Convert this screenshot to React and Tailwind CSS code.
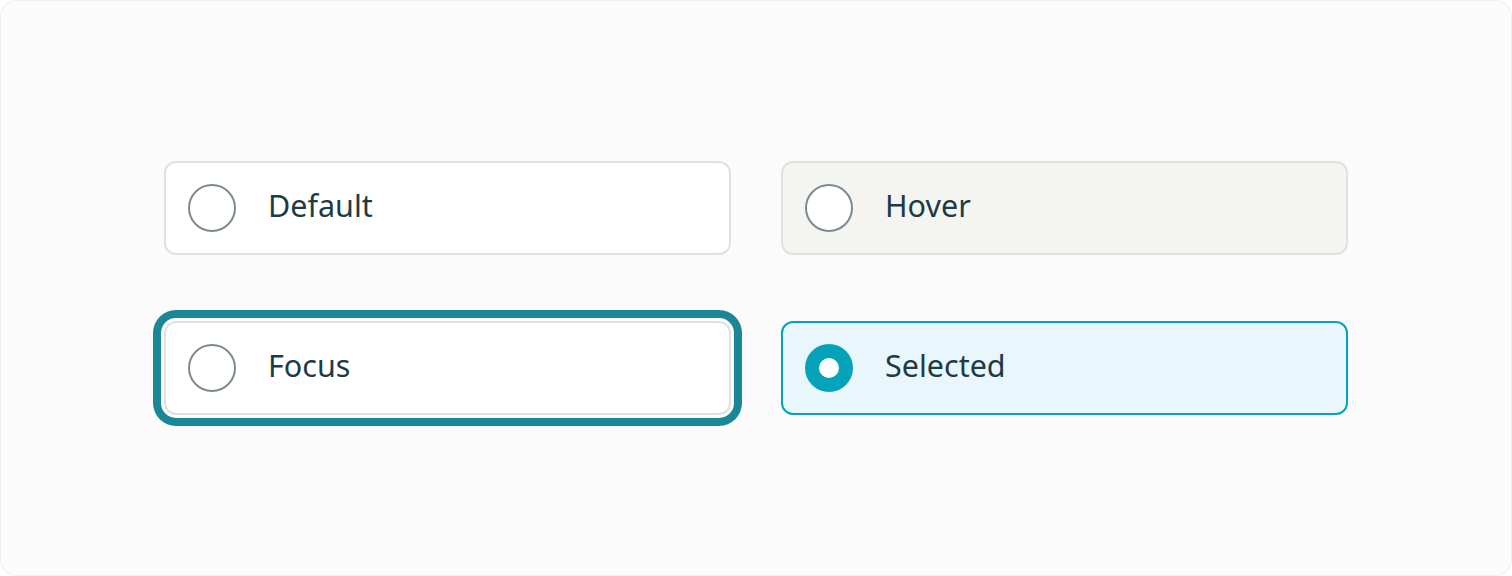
import React from 'react';

function Radio({ checked }) {
  if (checked) {
    return (
      <span className="flex h-12 w-12 shrink-0 items-center justify-center rounded-full bg-[#04a3b9]">
        <span className="h-5 w-5 rounded-full bg-white" />
      </span>
    );
  }
  return <span className="h-12 w-12 shrink-0 rounded-full border-2 border-[#7c8b8f] bg-white" />;
}

function Option({ label, variant }) {
  const styles = {
    default: 'bg-white border-[#dfe1e2]',
    hover: 'bg-[#f4f4f1] border-[#dfe1e2]',
    focus: 'bg-white border-[#dfe1e2] ring-[8px] ring-[#1b8796] ring-offset-[3px] ring-offset-white',
    selected: 'bg-[#e9f6fb] border-[#04a3b9]',
  };

  return (
    <div className={`flex h-[94px] items-center gap-8 rounded-xl border-2 px-[22px] ${styles[variant]}`}>
      <Radio checked={variant === 'selected'} />
      <span className="pb-[5px] text-[30.5px] font-[450] text-[#1d3b45]">{label}</span>
    </div>
  );
}

export default function App() {
  return (
    <div
      className="flex h-[576px] w-full items-center justify-center rounded-2xl border border-[#efefef] bg-[#fbfbfb]"
      style={{ fontFamily: '"Noto Sans", "Open Sans", sans-serif' }}
    >
      <div className="grid w-[1184px] grid-cols-2 gap-x-[50px] gap-y-[66px]">
        <Option label="Default" variant="default" />
        <Option label="Hover" variant="hover" />
        <Option label="Focus" variant="focus" />
        <Option label="Selected" variant="selected" />
      </div>
    </div>
  );
}
